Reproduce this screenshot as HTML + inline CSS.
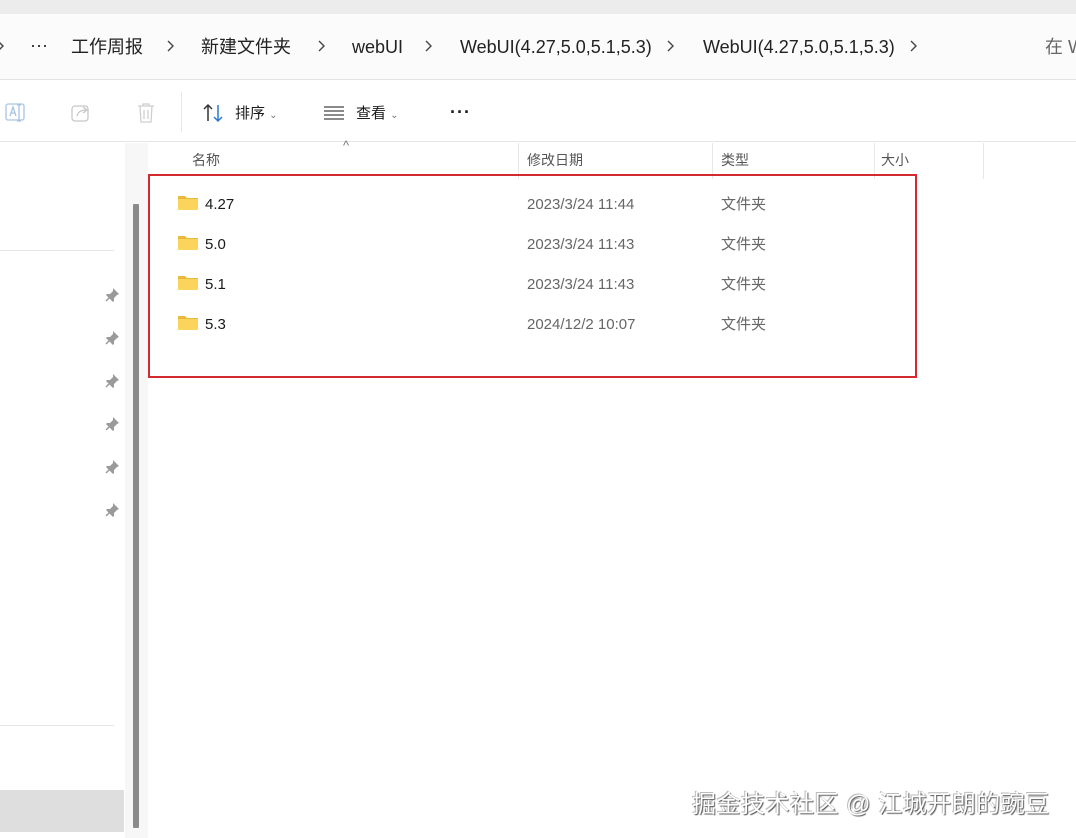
<!DOCTYPE html>
<html><head><meta charset="utf-8"><style>
*{margin:0;padding:0;box-sizing:border-box}
body{width:1076px;height:838px;overflow:hidden;background:#fff;font-family:"Liberation Sans","Noto Sans CJK SC",sans-serif;position:relative;color:#1a1a1a}
.a{position:absolute}
.t,.t span,.r span{white-space:nowrap}
.ch{position:absolute;top:5px}
</style></head><body>
<div class="a" style="left:0;top:0;width:1076px;height:14px;background:#ececec"></div>
<div class="a" style="left:0;top:14px;width:1076px;height:66px;background:#fbfbfb;border-bottom:1px solid #e3e3e3"></div>
<svg width="0" height="0" style="position:absolute"><defs><path id="cv" d="M1 1l5 5-5 5" fill="none" stroke="#444" stroke-width="1.4"/></defs></svg>
<div class="a t" style="left:0;top:35px;width:1076px;height:26px;font-size:18px;color:#222">
<svg class="ch" style="left:-3px" width="8" height="12"><use href="#cv"/></svg>
<span style="position:absolute;left:30px">···</span>
<span style="position:absolute;left:71px;top:-2px">工作周报</span>
<svg class="ch" style="left:167px" width="8" height="12"><use href="#cv"/></svg>
<span style="position:absolute;left:201px;top:-2px">新建文件夹</span>
<svg class="ch" style="left:318px" width="8" height="12"><use href="#cv"/></svg>
<span style="position:absolute;left:352px;top:2px">webUI</span>
<svg class="ch" style="left:425px" width="8" height="12"><use href="#cv"/></svg>
<span style="position:absolute;left:460px;top:2px">WebUI(4.27,5.0,5.1,5.3)</span>
<svg class="ch" style="left:667px" width="8" height="12"><use href="#cv"/></svg>
<span style="position:absolute;left:703px;top:2px">WebUI(4.27,5.0,5.1,5.3)</span>
<svg class="ch" style="left:910px" width="8" height="12"><use href="#cv"/></svg>
<span style="position:absolute;left:1045px;top:-2px;color:#666">在 W</span>
</div>
<div class="a" style="left:0;top:80px;width:1076px;height:62px;background:#fff;border-bottom:1px solid #e5e5e5"></div>
<svg class="a" style="left:4px;top:102px" width="24" height="22" viewBox="0 0 24 22" fill="none" stroke="#a8c4e0" stroke-width="1.3"><rect x="2" y="2" width="18" height="16" rx="2"/><path d="M6 14l3-9 3 9M7 11h4M15 3v16M13 3h4M13 19h4"/></svg>
<svg class="a" style="left:70px;top:102px" width="24" height="22" viewBox="0 0 24 22" fill="none" stroke="#c8c8c8" stroke-width="1.3"><rect x="2" y="4" width="16" height="15" rx="3"/><path d="M7 14c1-4 4-6 9-6M13 5l4 3-4 3"/></svg>
<svg class="a" style="left:135px;top:101px" width="22" height="24" viewBox="0 0 22 24" fill="none" stroke="#cfcfcf" stroke-width="1.3"><path d="M3 5h16M8 5V3h6v2M5 5l1 16h10l1-16M9 9v9M13 9v9"/></svg>
<div class="a" style="left:181px;top:92px;width:1px;height:40px;background:#e8e8e8"></div>
<svg class="a" style="left:202px;top:103px" width="24" height="20" viewBox="0 0 24 20" fill="none" stroke-width="1.5"><path d="M6 18V2M2 6l4-4 4 4" stroke="#333"/><path d="M16 2v16M12 14l4 4 4-4" stroke="#2a79d0"/></svg>
<div class="a t" style="left:235px;top:102px;font-size:15px">排序 <span style="font-size:10px;color:#777">⌄</span></div>
<svg class="a" style="left:323px;top:105px" width="22" height="16" viewBox="0 0 22 16" stroke="#444" stroke-width="1.3"><path d="M1 2h20M1 6h20M1 10h20M1 14h20"/></svg>
<div class="a t" style="left:356px;top:102px;font-size:15px">查看 <span style="font-size:10px;color:#777">⌄</span></div>
<div class="a t" style="left:450px;top:102px;font-size:18px;font-weight:bold;letter-spacing:1px">···</div>
<!-- nav -->
<div class="a" style="left:0;top:250px;width:114px;height:1px;background:#e6e6e6"></div>
<div class="a" style="left:0;top:725px;width:114px;height:1px;background:#e6e6e6"></div>
<div class="a" style="left:0;top:790px;width:124px;height:42px;background:#dedede"></div>
<div class="a" style="left:125px;top:143px;width:23px;height:695px;background:#f7f7f7"></div>
<div class="a" style="left:133px;top:204px;width:6px;height:624px;background:#8a8a8a;border-radius:1px"></div>
<svg width="0" height="0" style="position:absolute"><defs><g id="pin"><path d="M8 1l6 6-2 1-3 3 0 3-1 1-7-7 1-1 3 0 3-3z" fill="#9a9a9a"/><path d="M5 10l-4 4" stroke="#9a9a9a" stroke-width="1.5"/></g></defs></svg>
<svg class="a" style="left:105px;top:287px" width="16" height="16"><use href="#pin"/></svg>
<svg class="a" style="left:105px;top:330px" width="16" height="16"><use href="#pin"/></svg>
<svg class="a" style="left:105px;top:373px" width="16" height="16"><use href="#pin"/></svg>
<svg class="a" style="left:105px;top:416px" width="16" height="16"><use href="#pin"/></svg>
<svg class="a" style="left:105px;top:459px" width="16" height="16"><use href="#pin"/></svg>
<svg class="a" style="left:105px;top:502px" width="16" height="16"><use href="#pin"/></svg>
<!-- header -->
<div class="a t" style="left:343px;top:138px;font-size:13px;color:#777">^</div>
<div class="a t" style="left:192px;top:150px;font-size:14px;color:#555">名称</div>
<div class="a" style="left:518px;top:143px;width:1px;height:36px;background:#e8e8e8"></div>
<div class="a t" style="left:527px;top:150px;font-size:14px;color:#555">修改日期</div>
<div class="a" style="left:712px;top:143px;width:1px;height:36px;background:#e8e8e8"></div>
<div class="a t" style="left:721px;top:150px;font-size:14px;color:#555">类型</div>
<div class="a" style="left:874px;top:143px;width:1px;height:36px;background:#e8e8e8"></div>
<div class="a t" style="left:881px;top:150px;font-size:14px;color:#555">大小</div>
<div class="a" style="left:983px;top:143px;width:1px;height:36px;background:#e8e8e8"></div>
<!-- rows -->
<div class="a" style="left:148px;top:174px;width:769px;height:204px;border:2px solid #d42a2f"></div>
<svg width="0" height="0" style="position:absolute"><defs><g id="fd"><path d="M0 2h7l2 2h11v12H0z" fill="#e8b93a"/><rect x="0" y="5" width="20" height="11" fill="#fbd45c"/></g></defs></svg>
<div class="a r" style="left:0;top:194px;width:1000px;font-size:15px">
<div style="position:relative;height:40px">
<svg style="position:absolute;left:178px;top:0" width="20" height="16"><use href="#fd"/></svg>
<span style="position:absolute;left:205px;top:2px">4.27</span><span style="position:absolute;left:527px;top:2px;color:#666">2023/3/24 11:44</span><span style="position:absolute;left:721px;top:-1px;color:#666">文件夹</span></div>
<div style="position:relative;height:40px">
<svg style="position:absolute;left:178px;top:0" width="20" height="16"><use href="#fd"/></svg>
<span style="position:absolute;left:205px;top:2px">5.0</span><span style="position:absolute;left:527px;top:2px;color:#666">2023/3/24 11:43</span><span style="position:absolute;left:721px;top:-1px;color:#666">文件夹</span></div>
<div style="position:relative;height:40px">
<svg style="position:absolute;left:178px;top:0" width="20" height="16"><use href="#fd"/></svg>
<span style="position:absolute;left:205px;top:2px">5.1</span><span style="position:absolute;left:527px;top:2px;color:#666">2023/3/24 11:43</span><span style="position:absolute;left:721px;top:-1px;color:#666">文件夹</span></div>
<div style="position:relative;height:40px">
<svg style="position:absolute;left:178px;top:0" width="20" height="16"><use href="#fd"/></svg>
<span style="position:absolute;left:205px;top:2px">5.3</span><span style="position:absolute;left:527px;top:2px;color:#666">2024/12/2 10:07</span><span style="position:absolute;left:721px;top:-1px;color:#666">文件夹</span></div>
</div>
<div class="a t" style="left:692px;top:784px;font-size:24px;letter-spacing:0.5px;color:#fff;text-shadow:1px 1px 1px #555,-1px -1px 0 #bbb">掘金技术社区 @ 江城开朗的豌豆</div>
</body></html>
